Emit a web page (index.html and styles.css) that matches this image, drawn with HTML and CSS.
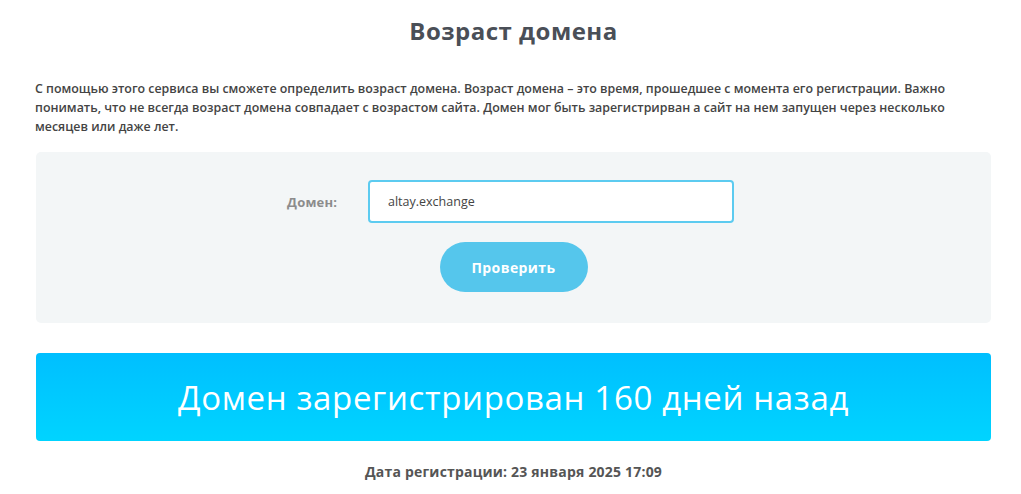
FILE: index.html
```html
<!DOCTYPE html>
<html lang="ru">
<head>
<meta charset="utf-8">
<title>Возраст домена</title>
<link rel="stylesheet" href="styles.css">
</head>
<body>
<main class="page">
  <h1 class="title">Возраст домена</h1>
  <p class="intro">С помощью этого сервиса вы сможете определить возраст домена. Возраст домена – это время, прошедшее с момента его регистрации. Важно понимать, что не всегда возраст домена совпадает с возрастом сайта. Домен мог быть зарегистрирван а сайт на нем запущен через несколько месяцев или даже лет.</p>
  <form class="panel">
    <div class="field">
      <label class="label" for="domain">Домен:</label>
      <input class="input" id="domain" type="text" value="altay.exchange">
    </div>
    <button class="btn" type="button">Проверить</button>
  </form>
  <div class="result">Домен зарегистрирован 160 дней назад</div>
  <p class="date">Дата регистрации: 23 января 2025 17:09</p>
</main>
</body>
</html>
```
FILE: styles.css
```css
* { box-sizing: border-box; }
html, body { margin: 0; padding: 0; background: #fff; }
body { font-family: "Open Sans", "Liberation Sans", sans-serif; color: #444; }
.page { width: 955px; margin-left: 36px; padding-top: 15px; }
.title { margin: 0; text-align: center; font-size: 24px; font-weight: 700; color: #4a4f57; line-height: 32px; letter-spacing: 0.5px; }
.intro { margin: 32px 0 0 -1px; font-size: 12.4px; font-weight: 600; line-height: 19px; color: #444; }
.panel { margin-top: 16px; background: #f3f6f7; border-radius: 5px; padding: 28px 0 31px; display: flex; flex-direction: column; align-items: center; gap: 19px; }
.field { display: flex; align-items: center; margin-left: -6px; }
.label { width: 81px; font-size: 13px; font-weight: 700; color: #8c8c8c; letter-spacing: 0.2px; }
.input { width: 366px; height: 43px; border: 2px solid #5ccbf0; border-radius: 4px; padding: 0 18px; font-family: inherit; font-size: 12.5px; font-weight: 500; color: #444; background: #fff; outline: none; }
.btn { width: 148px; height: 50px; border: none; border-radius: 25px; background: #55c6ec; color: #fff; font-family: inherit; font-size: 14px; font-weight: 700; letter-spacing: 0.4px; }
.result { margin-top: 30px; height: 88px; border-radius: 4px; background: linear-gradient(#00bfff, #00d4ff); color: #fff; display: flex; align-items: center; justify-content: center; font-size: 33px; font-weight: 400; letter-spacing: 0.65px; }
.date { margin: 21px 0 0; text-align: center; font-size: 14px; font-weight: 700; color: #555; letter-spacing: 0.2px; }
```
